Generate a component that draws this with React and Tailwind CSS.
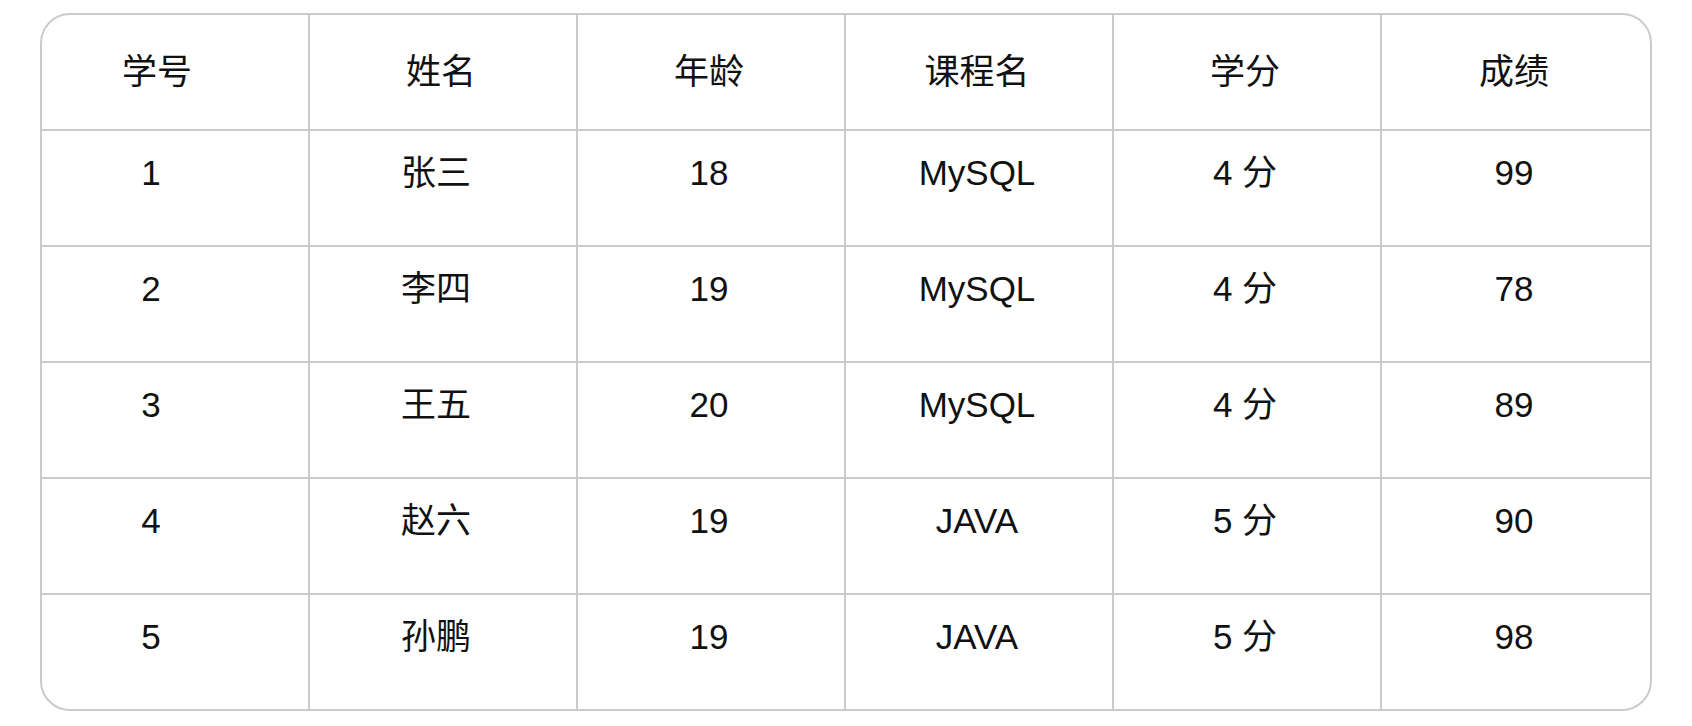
import React from "react";

const headers = ["学号", "姓名", "年龄", "课程名", "学分", "成绩"];

const rows = [
    ["1", "张三", "18", "MySQL", "4 分", "99"],
    ["2", "李四", "19", "MySQL", "4 分", "78"],
    ["3", "王五", "20", "MySQL", "4 分", "89"],
    ["4", "赵六", "19", "JAVA", "5 分", "90"],
    ["5", "孙鹏", "19", "JAVA", "5 分", "98"],
];

// body cells sit a bit left of the header in the first two columns
const bodyPad = ["pr-[48px]", "pr-[14px]", "pr-[4px]", "pr-[4px]", "pr-[4px]", "pr-[4px]"];

const App = () => {
    return (
        <div className="w-[1692px] h-[726px] bg-white pt-[13px] px-[40px] font-['Liberation_Sans','Noto_Sans_CJK_SC',sans-serif] text-[#111]">
            <div className="border-2 border-[#cbcbcb] rounded-[30px] overflow-hidden">
                {/* header */}
                <div className="grid grid-cols-6 h-[114px]">
                    {headers.map((h, i) => (
                        <div
                            key={h}
                            className={
                                "flex items-center justify-center text-[35px] leading-[40px] " +
                                (i === 0 ? "pr-[36px] " : "pr-[4px] ") +
                                (i < 5 ? "border-r-2 border-[#cbcbcb]" : "")
                            }
                        >
                            {h}
                        </div>
                    ))}
                </div>

                {/* body */}
                {rows.map((row) => (
                    <div key={row[0]} className="grid grid-cols-6 h-[116px] border-t-2 border-[#cbcbcb]">
                        {row.map((cell, i) => (
                            <div
                                key={i}
                                className={
                                    "flex justify-center pt-[22px] text-[35px] leading-[40px] whitespace-pre " +
                                    bodyPad[i] +
                                    (i < 5 ? " border-r-2 border-[#cbcbcb]" : "")
                                }
                            >
                                {cell}
                            </div>
                        ))}
                    </div>
                ))}
            </div>
        </div>
    );
};

export default App;
